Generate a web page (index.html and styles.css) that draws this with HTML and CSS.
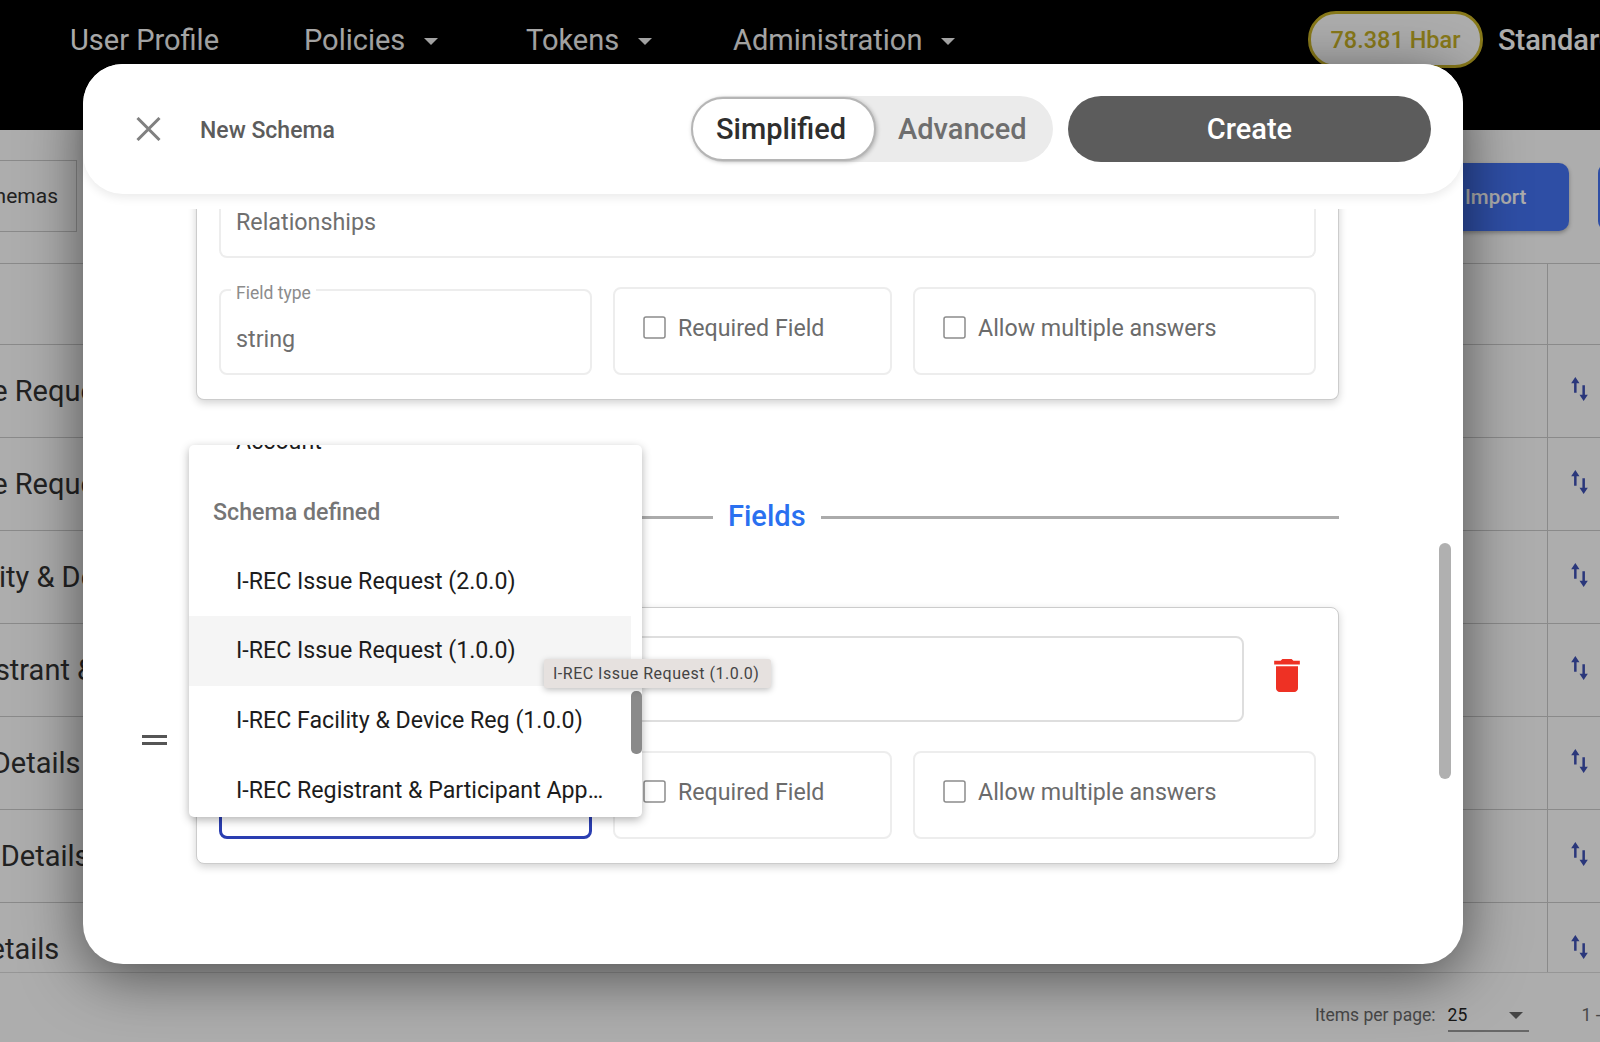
FILE: index.html
```html
<!DOCTYPE html>
<html lang="en">
<head>
    <meta charset="UTF-8">
    <title>New Schema</title>
    <link rel="stylesheet" href="styles.css">
</head>
<body>
    <svg class="defs" width="0" height="0">
        <symbol id="sort" viewBox="0 0 18 24"><path d="M5 0 9 6H6.2V15H3.8V6H1ZM13 23 17 17H14.2V8H11.8V17H9Z"/></symbol>
        <symbol id="check" viewBox="0 0 23 23"><rect x="1" y="1" width="21" height="21" rx="2" fill="#fff" stroke="#8c8c8c" stroke-width="1.5"/></symbol>
    </svg>

    <!-- page behind the dialog -->
    <div class="page">
        <nav class="nav">
            <a class="nav-item nav-first">User Profile</a>
            <a class="nav-item nav-policies">Policies<i class="caret"></i></a>
            <a class="nav-item nav-tokens">Tokens<i class="caret"></i></a>
            <a class="nav-item nav-admin">Administration<i class="caret"></i></a>
            <span class="balance">78.381 Hbar</span>
            <span class="user">Standard Registry</span>
        </nav>
        <div class="toolbar">
            <div class="tab"><span class="tab-text">Schemas</span></div>
            <div class="import-btn">Import</div>
            <div class="next-btn"></div>
        </div>
        <div class="table">
            <div class="row row-head"><span class="name"></span><span class="op"></span></div>
            <div class="row"><span class="name">I-REC Issue Request</span><span class="op"><svg class="sort"><use href="#sort"/></svg></span></div>
            <div class="row"><span class="name">I-REC Issue Request</span><span class="op"><svg class="sort"><use href="#sort"/></svg></span></div>
            <div class="row"><span class="name">I-REC Facility &amp; Device Reg</span><span class="op"><svg class="sort"><use href="#sort"/></svg></span></div>
            <div class="row"><span class="name">I-REC Registrant &amp; Participant</span><span class="op"><svg class="sort"><use href="#sort"/></svg></span></div>
            <div class="row"><span class="name">Company Details</span><span class="op"><svg class="sort"><use href="#sort"/></svg></span></div>
            <div class="row"><span class="name">Registrant Details</span><span class="op"><svg class="sort"><use href="#sort"/></svg></span></div>
            <div class="row"><span class="name">Contact Details</span><span class="op"><svg class="sort"><use href="#sort"/></svg></span></div>
        </div>
        <div class="paginator">
            <span class="per-page">Items per page:</span>
            <span class="per-select">25<i class="caret caret-dark"></i></span>
            <span class="range">1 - 7 of 7</span>
        </div>
    </div>

    <div class="overlay"></div>

    <!-- dialog -->
    <div class="modal">
        <header class="modal-head">
            <svg class="close" viewBox="0 0 25 24"><path d="M1.5 1 23.5 23M23.5 1 1.5 23" fill="none" stroke="#808080" stroke-width="3"/></svg>
            <span class="modal-title">New Schema</span>
            <div class="toggle">
                <span class="toggle-on">Simplified</span>
                <span class="toggle-off">Advanced</span>
            </div>
            <button class="create">Create</button>
        </header>

        <div class="modal-body">
            <div class="scroll-inner">
                <div class="card card-first">
                    <div class="box box-wide"><span class="box-value">Relationships</span></div>
                    <div class="field-row">
                        <div class="box box-select">
                            <span class="float-label">Field type</span>
                            <span class="box-value">string</span>
                        </div>
                        <label class="box box-check"><svg class="check"><use href="#check"/></svg>Required Field</label>
                        <label class="box box-check"><svg class="check"><use href="#check"/></svg>Allow multiple answers</label>
                    </div>
                </div>

                <div class="divider"><span class="divider-line"></span><span class="divider-text">Fields</span><span class="divider-line"></span></div>

                <div class="field-wrap">
                    <div class="handle"></div>
                    <div class="card card-second">
                        <div class="name-row">
                            <div class="box box-name"></div>
                            <svg class="trash" viewBox="5 3 14 18"><path d="M6 19c0 1.1.9 2 2 2h8c1.1 0 2-.9 2-2V7H6v12zM19 4h-3.5l-1-1h-5l-1 1H5v2h14V4z"/></svg>
                        </div>
                        <div class="field-row">
                            <div class="box box-select box-focus"></div>
                            <label class="box box-check"><svg class="check"><use href="#check"/></svg>Required Field</label>
                            <label class="box box-check"><svg class="check"><use href="#check"/></svg>Allow multiple answers</label>
                        </div>
                    </div>
                </div>
            </div>
            <div class="modal-scrollbar"></div>
        </div>

        <!-- open select panel -->
        <div class="panel">
            <div class="panel-list">
                <div class="option">Account</div>
                <div class="group-label">Schema defined</div>
                <div class="option">I-REC Issue Request (2.0.0)</div>
                <div class="option option-hover">I-REC Issue Request (1.0.0)</div>
                <div class="option">I-REC Facility &amp; Device Reg (1.0.0)</div>
                <div class="option">I-REC Registrant &amp; Participant Application (1.0.0)</div>
            </div>
            <div class="panel-scrollbar"></div>
        </div>
        <div class="tooltip">I-REC Issue Request (1.0.0)</div>
    </div>
</body>
</html>
```

FILE: styles.css
```css
* {
    box-sizing: border-box;
}
html, body {
    margin: 0;
    height: 100%;
    overflow: hidden;
}
body {
    position: relative;
    font-family: Roboto, "Liberation Sans", sans-serif;
    background-color: #fff;
    color: #333;
}
.defs {
    display: block;
    height: 0;
}

/* page behind */
.page {
    height: 1042px;
    display: flex;
    flex-direction: column;
}
.nav {
    height: 130px;
    flex: none;
    background-color: #000;
    color: #fff;
    display: flex;
    align-items: flex-start;
    padding: 11px 0 0 70px;
    font-size: 29px;
    white-space: nowrap;
    overflow: hidden;
}
.nav > * {
    flex: none;
}
.nav-item {
    height: 57px;
    line-height: 57px;
    margin-top: 1px;
    display: flex;
    align-items: center;
}
.nav-first { width: 234px; }
.nav-policies { width: 222px; }
.nav-tokens { width: 207px; }
.nav-admin { width: 576px; }
.caret {
    width: 0;
    height: 0;
    margin-left: 19px;
    margin-top: 2px;
    border-left: 7px solid transparent;
    border-right: 7px solid transparent;
    border-top: 7px solid #fff;
}
.balance {
    width: 175px;
    height: 57px;
    margin-left: -1px;
    line-height: 52px;
    text-align: center;
    font-size: 23.5px;
    font-weight: 500;
    color: #c9b327;
    background-color: #fff;
    border: 3px solid #c9b327;
    border-radius: 28px;
}
.user {
    margin: 1px 0 0 15px;
    line-height: 57px;
    font-weight: 500;
}
.toolbar {
    height: 133px;
    flex: none;
    position: relative;
    display: flex;
    align-items: flex-start;
    padding-top: 30px;
}
.toolbar > * {
    flex: none;
}
.tab {
    width: 77px;
    height: 72px;
    display: flex;
    justify-content: flex-end;
    line-height: 70px;
    border: 1px solid #ccc;
    border-left: 0;
    font-size: 21px;
    padding-right: 18px;
    white-space: nowrap;
    overflow: hidden;
}
.tab-text {
    flex: none;
}
.import-btn {
    margin: 3px 0 0 1300px;
    width: 192px;
    height: 68px;
    line-height: 68px;
    padding-left: 88px;
    background-color: #4574f3;
    color: #fff;
    font-size: 20.5px;
    font-weight: 500;
    border-radius: 10px;
    box-shadow: 0 2px 4px rgba(0, 0, 0, 0.3);
}
.next-btn {
    margin: 3px 0 0 29px;
    width: 40px;
    height: 68px;
    background-color: #4574f3;
    border-radius: 10px;
}
.table {
    height: 710px;
    flex: none;
    overflow: hidden;
    border-top: 1px solid #ccc;
    border-bottom: 1px solid #ddd;
}
.row {
    height: 93px;
    display: flex;
    border-bottom: 1px solid #ccc;
}
.row-head {
    height: 81px;
}
.name {
    flex: 1;
    margin-left: -138px;
    font-size: 29px;
    line-height: 92px;
    white-space: nowrap;
}
.op {
    width: 53px;
    flex: none;
    border-left: 1px solid #ccc;
    padding: 32px 0 0 22px;
}
.sort {
    width: 19px;
    height: 25px;
    display: block;
    fill: #3f51b5;
}
.paginator {
    flex: 1;
    display: flex;
    align-items: flex-start;
    padding: 31px 0 0 1315px;
    font-size: 17.5px;
    line-height: 22px;
    color: #6b6b6b;
    white-space: nowrap;
    overflow: hidden;
}
.paginator > * {
    flex: none;
}
.per-select {
    width: 81px;
    height: 28px;
    margin-left: 12px;
    display: flex;
    justify-content: space-between;
    color: #222;
    border-bottom: 2px solid #999;
}
.caret-dark {
    margin: 8px 6px 0 0;
    border-top-color: #666;
}
.range {
    margin-left: 53px;
}

/* dialog */
.overlay {
    position: absolute;
    inset: 0;
    background-color: rgba(0, 0, 0, 0.32);
}
.modal {
    position: absolute;
    left: 83px;
    top: 64px;
    width: 1380px;
    height: 900px;
    background-color: #fff;
    border-radius: 40px;
    box-shadow: 0 12px 60px rgba(0, 0, 0, 0.55);
    display: flex;
    flex-direction: column;
}
.modal-head {
    height: 130px;
    flex: none;
    position: relative;
    z-index: 1;
    display: flex;
    align-items: center;
    padding: 0 32px 0 53px;
    border-radius: 40px;
    background-color: #fff;
    box-shadow: 0 4px 10px rgba(0, 0, 0, 0.08);
}
.close {
    width: 25px;
    height: 24px;
    flex: none;
}
.modal-title {
    margin: 2px 0 0 39px;
    font-size: 23px;
    font-weight: 500;
    color: #5c5c5c;
    flex: 1;
}
.toggle {
    width: 362px;
    height: 66px;
    display: flex;
    align-items: center;
    background-color: #ebebeb;
    border-radius: 33px;
    font-size: 29px;
    font-weight: 500;
}
.toggle-on {
    width: 185px;
    height: 64px;
    line-height: 60px;
    padding-right: 5px;
    text-align: center;
    background-color: #fff;
    color: #2e2e2e;
    border: 2px solid #b5b5b5;
    border-radius: 32px;
    box-shadow: 1px 1px 4px rgba(0, 0, 0, 0.25);
}
.toggle-off {
    margin-left: 22px;
    color: #6e6e6e;
}
.create {
    width: 363px;
    height: 66px;
    margin-left: 15px;
    border: none;
    border-radius: 33px;
    background-color: #5c5c5c;
    color: #fff;
    font-family: inherit;
    font-size: 29px;
    font-weight: 500;
}
.modal-body {
    flex: 1;
    position: relative;
    margin-top: 15px;
    overflow: hidden;
}
.scroll-inner {
    padding: 0 0 0 59px;
}
.card {
    width: 1143px;
    padding: 0 22px 24px;
    background-color: #fff;
    border-radius: 8px;
    border: 1px solid #ccc;
    box-shadow: 0 3px 8px rgba(0, 0, 0, 0.18);
}
.card-first {
    margin: -18px 0 0 54px;
    border-top: 0;
}
.card-second {
    padding-top: 28px;
}
.box {
    position: relative;
    border: 2px solid #ededed;
    border-radius: 8px;
    background-color: #fff;
}
.box-wide {
    height: 67px;
    padding: 17px 0 0 15px;
    margin-bottom: 31px;
    border-top: 0;
}
.box-value {
    font-size: 23.3px;
    color: #6f6f6f;
}
.field-row {
    display: grid;
    grid-template-columns: 373px 279px 403px;
    gap: 21px;
    height: 86px;
}
.box-select {
    padding: 34px 0 0 15px;
}
.float-label {
    position: absolute;
    left: 10px;
    top: -8px;
    padding: 0 5px;
    background-color: #fff;
    font-size: 17.5px;
    color: #8c8c8c;
}
.box-check {
    display: flex;
    align-items: flex-start;
    margin-top: -2px;
    padding: 27px 0 0 28px;
    font-size: 23.2px;
    line-height: 24px;
    color: #6b6b6b;
}
.check {
    width: 23px;
    height: 23px;
    margin-right: 12px;
    flex: none;
}
.divider {
    height: 36px;
    margin: 99px 0 0 54px;
    width: 1143px;
    display: flex;
    align-items: center;
}
.divider-line {
    flex: 1;
    height: 3px;
    background-color: #ababab;
}
.divider-line:first-child {
    flex: none;
    width: 517px;
}
.divider-text {
    margin: -2px 15px 0;
    font-size: 29px;
    font-weight: 500;
    color: #2a70f0;
}
.field-wrap {
    display: flex;
    align-items: center;
    margin-top: 72px;
}
.handle {
    width: 25px;
    height: 10px;
    margin: 9px 29px 0 0;
    flex: none;
    border-top: 3px solid #555;
    border-bottom: 3px solid #555;
}
.name-row {
    display: flex;
    align-items: center;
    margin-bottom: 31px;
}
.box-name {
    width: 1025px;
    height: 86px;
    border-color: #dedede;
}
.trash {
    width: 26px;
    height: 33px;
    margin: -7px 0 0 30px;
    fill: #ee3124;
}
.box-focus {
    border: 3px solid #2a3eb1;
}
.modal-scrollbar {
    position: absolute;
    left: 1356px;
    top: 334px;
    width: 12px;
    height: 236px;
    border-radius: 6px;
    background-color: #b0b0b0;
}

/* select panel */
.panel {
    position: absolute;
    left: 106px;
    top: 381px;
    width: 453px;
    height: 372px;
    z-index: 2;
    overflow: hidden;
    background-color: #fff;
    border-radius: 5px;
    box-shadow: 0 3px 10px rgba(0, 0, 0, 0.3);
}
.panel-list {
    width: 442px;
    margin-top: -38px;
    font-size: 23.2px;
    color: #1c1c1c;
}
.option {
    height: 69.7px;
    line-height: 69.7px;
    padding: 0 25px 0 47px;
    white-space: nowrap;
    overflow: hidden;
    text-overflow: ellipsis;
}
.option-hover {
    background-color: #f5f5f5;
}
.group-label {
    height: 70px;
    line-height: 70px;
    padding-left: 24px;
    font-size: 23.2px;
    font-weight: 500;
    color: #757575;
}
.panel-scrollbar {
    position: absolute;
    left: 442px;
    top: 246px;
    width: 11px;
    height: 63px;
    border-radius: 5px;
    background-color: #8a8a8a;
}
.tooltip {
    position: absolute;
    left: 461px;
    top: 595px;
    width: 227px;
    height: 29px;
    z-index: 3;
    line-height: 29px;
    padding-left: 9px;
    font-size: 16px;
    letter-spacing: 0.5px;
    color: #444;
    background-color: #e6e1df;
    border-radius: 3px;
    box-shadow: 0 2px 6px rgba(0, 0, 0, 0.25);
    white-space: nowrap;
}
```
